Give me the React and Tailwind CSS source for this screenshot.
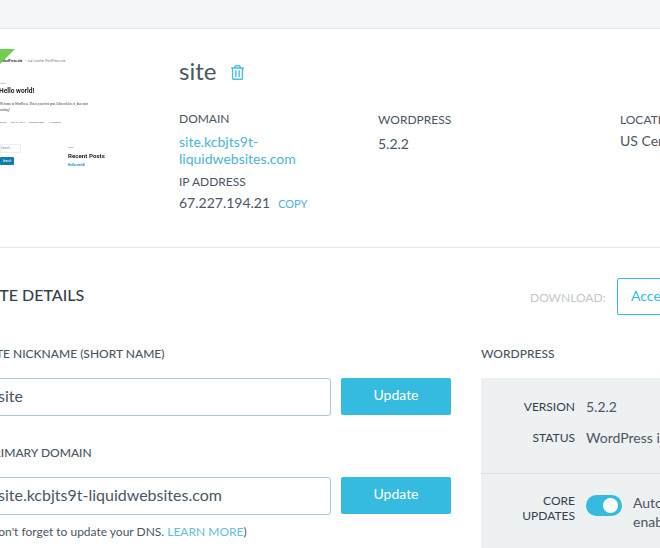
import React from "react";
import { FaRegTrashAlt } from "react-icons/fa";

const Label = ({ children, className = "" }) => (
  <div className={`text-[12px] leading-[16px] text-[#4a5664] ${className}`}>{children}</div>
);

// scaled-down capture of the WordPress front page
const SiteThumbnail = () => (
  <div className="relative w-[179px] shrink-0 pt-[29px] font-['Roboto',sans-serif] blur-[0.25px]">
    <svg className="absolute left-0 top-[20px]" width="15" height="15" viewBox="0 0 15 15">
      <polygon points="0,0 15,0 0,15" fill="#6fce50" />
    </svg>
    <div className="flex gap-[2px] pl-[2px] text-[3px] leading-[6px] text-[#888]">
      <span className="font-bold text-[#333]">WordPress site</span>
      <span>— Just another WordPress site</span>
    </div>
    <div className="mt-[19px] h-px w-[6px] bg-[#ccc]" />
    <div className="mt-[3px] -ml-[1px] text-[6.6px] font-bold leading-[9px] text-[#222]">Hello world!</div>
    <div className="mt-[5px] font-['Liberation_Serif',serif] text-[3px] leading-[6px] text-[#333]">
      Welcome to WordPress. This is your first post. Edit or delete it, then start
      <br />
      writing!
    </div>
    <div className="mt-[8px] flex gap-[4px] text-[2.4px] leading-[4px] text-[#666]">
      <span>admin</span>
      <span>July 23, 2019</span>
      <span>Uncategorized</span>
      <span>1 Comment</span>
    </div>
    <div className="mt-[19px] flex">
      <div className="w-[68px]">
        <div className="h-[9px] w-[21px] border border-[#eee] text-[2.8px] leading-[7px] text-[#888]">Search …</div>
        <div className="mt-[4px] h-[8px] w-[14px] rounded-[1px] bg-[#0f7cb0] text-center text-[2.8px] leading-[8px] text-white">
          Search
        </div>
      </div>
      <div>
        <div className="mt-[3px] h-px w-[6px] bg-[#ccc]" />
        <div className="mt-[4px] text-[6.2px] font-bold leading-[8px] text-[#222]">Recent Posts</div>
        <div className="mt-[3px] text-[3.2px] font-bold leading-[5px] text-[#1b8fc2]">Hello world!</div>
      </div>
    </div>
  </div>
);

const UpdateField = ({ label, value, children }) => (
  <div>
    <Label className="font-medium">{label}</Label>
    <div className="mt-[16px] flex gap-[10px]">
      <div className="h-[38px] w-[345px] rounded-[3px] border border-[#a9c8da] pl-[11px] text-[16px] leading-[34px] text-[#4a5664]">
        {value}
      </div>
      <button className="h-[37px] w-[110px] rounded-[2px] bg-[#36bbe0] pb-[5px] text-[14px] text-white">Update</button>
    </div>
    {children}
  </div>
);

const App = () => {
  return (
    <div className="h-[548px] w-[660px] overflow-hidden bg-white font-['Lato',sans-serif]">
      <div className="h-[29px] border-b border-[#e3e6e8] bg-[#f4f7f8]" />

      {/* site summary */}
      <div className="flex h-[219px] w-[900px] border-b border-[#e3e6e8]">
        <SiteThumbnail />
        <div className="w-[199px] shrink-0 pt-[26px]">
          <div className="flex items-center gap-[14px]">
            <span className="text-[24px] leading-[32px] text-[#4a5664]">site</span>
            <FaRegTrashAlt className="mt-[2px] text-[15px] text-[#49bfe3]" />
          </div>
          <Label className="mt-[24px]">DOMAIN</Label>
          <div className="mt-[6px] text-[14px] leading-[17px] text-[#49b5d9]">
            site.kcbjts9t-
            <br />
            liquidwebsites.com
          </div>
          <Label className="mt-[7px]">IP ADDRESS</Label>
          <div className="mt-[3px] flex items-baseline gap-[8px] text-[14px] leading-[20px] text-[#4a5664]">
            67.227.194.21
            <span className="text-[11px] text-[#49b5d9]">COPY</span>
          </div>
        </div>
        <div className="w-[242px] shrink-0 pt-[83px]">
          <Label>WORDPRESS</Label>
          <div className="mt-[6px] text-[14px] leading-[20px] text-[#4a5664]">5.2.2</div>
        </div>
        <div className="shrink-0 pt-[83px]">
          <Label>LOCATION</Label>
          <div className="mt-[3px] text-[14px] leading-[20px] text-[#4a5664]">US Central</div>
        </div>
      </div>

      {/* site details */}
      <div className="-ml-[14px] w-[900px]">
        <div className="flex h-[67px] items-end">
          <h2 className="mb-[9px] w-[544px] text-[16px] font-medium leading-[22px] text-[#333f4d]">SITE DETAILS</h2>
          <span className="mb-[9px] w-[87px] text-[12px] leading-[16px] text-[#c3c8cc]">DOWNLOAD:</span>
          <button className="h-[37px] w-[130px] rounded-[2px] border border-[#36bbe0] pb-[3px] pl-[13px] text-left text-[14px] text-[#36bbe0]">
            Access Logs
          </button>
        </div>
        <div className="mt-[31px] flex gap-[30px]">
          <div className="w-[465px] shrink-0">
            <UpdateField label="SITE NICKNAME (SHORT NAME)" value="site" />
            <div className="mt-[29px]">
              <UpdateField label="PRIMARY DOMAIN" value="site.kcbjts9t-liquidwebsites.com">
                <p className="mt-[9px] text-[12px] leading-[16px] text-[#4a5664]">
                  (Don't forget to update your DNS. <span className="text-[#5fbfe0]">LEARN MORE</span>)
                </p>
              </UpdateField>
            </div>
          </div>
          <div className="w-[400px]">
            <Label className="font-medium">WORDPRESS</Label>
            <div className="mt-[16px] bg-[#eef1f2]">
              <div className="h-[96px] border-b border-[#dfe3e5] pt-[19px]">
                <div className="flex items-center gap-[11px]">
                  <div className="w-[94px] text-right text-[12px] text-[#333f4d]">VERSION</div>
                  <div className="text-[14px] leading-[20px] text-[#4a5664]">5.2.2</div>
                </div>
                <div className="mt-[11px] flex items-center gap-[11px]">
                  <div className="w-[94px] text-right text-[12px] text-[#333f4d]">STATUS</div>
                  <div className="text-[14px] leading-[20px] text-[#4a5664]">WordPress is up to date</div>
                </div>
              </div>
              <div className="flex gap-[11px] pt-[19px] pb-[20px]">
                <div className="w-[94px] text-right text-[12px] leading-[15px] text-[#333f4d]">
                  CORE
                  <br />
                  UPDATES
                </div>
                <div className="mt-[2px] flex h-[21px] w-[36px] shrink-0 items-center justify-end rounded-full bg-[#36bbe0] pr-[4px]">
                  <div className="h-[15px] w-[15px] rounded-full bg-white" />
                </div>
                <div className="text-[14px] leading-[19px] text-[#4a5664]">
                  Automatic updates
                  <br />
                  enabled
                </div>
              </div>
            </div>
          </div>
        </div>
      </div>
    </div>
  );
};

export default App;
